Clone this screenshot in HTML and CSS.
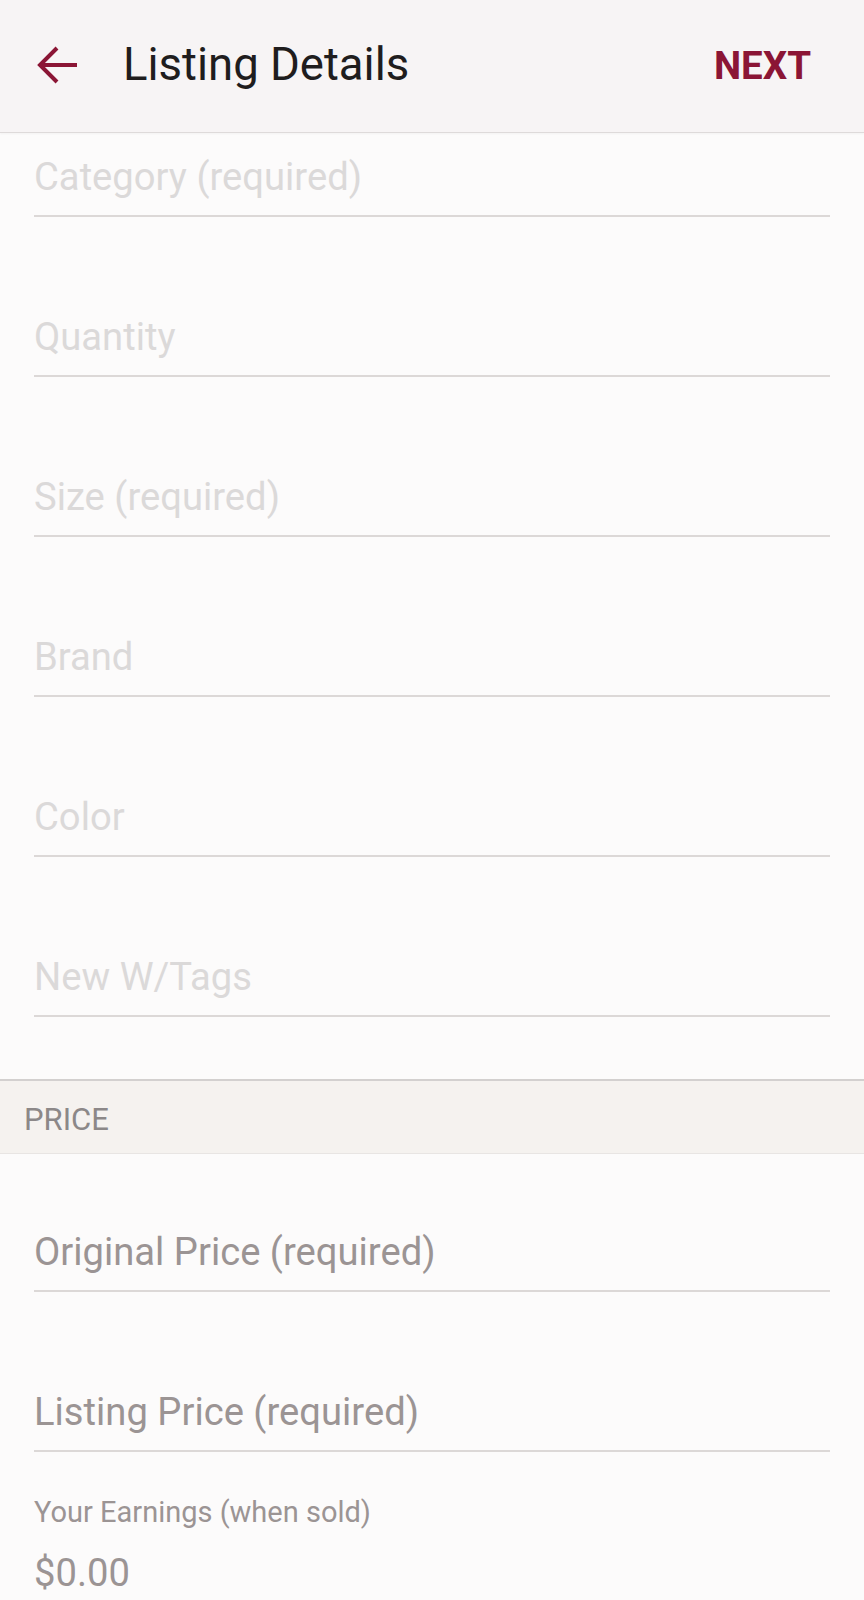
FILE: index.html
```html
<!DOCTYPE html>
<html lang="en">

<head>
      <meta charset="UTF-8">
      <meta name="viewport" content="width=device-width, initial-scale=1.0">
      <title>Listing Details</title>
      <link rel="stylesheet" href="styles.css">
</head>

<body>
      <header class="top-bar">
            <svg class="back-icon" width="40" height="40" viewBox="0 0 40 40">
                  <path d="M4 19H40M20 2L3 19L20 36" fill="none" stroke="#8b1535" stroke-width="4" />
            </svg>
            <h1 class="title">Listing Details</h1>
            <span class="next">NEXT</span>
      </header>

      <div class="fields">
            <div class="field hint">Category (required)</div>
            <div class="field hint">Quantity</div>
            <div class="field hint">Size (required)</div>
            <div class="field hint">Brand</div>
            <div class="field hint">Color</div>
            <div class="field hint">New W/Tags</div>
      </div>

      <div class="section-head">PRICE</div>

      <div class="fields price-fields">
            <div class="field price">Original Price (required)</div>
            <div class="field price">Listing Price (required)</div>
      </div>

      <div class="earnings">
            <div class="earnings-label">Your Earnings (when sold)</div>
            <div class="earnings-value">$0.00</div>
      </div>
</body>

</html>
```

FILE: styles.css
```css
body {
      font-family: Roboto, "Liberation Sans", sans-serif;
      background-color: #fcfbfb;
      margin: 0;
      padding: 0;
}

.top-bar {
      height: 133px;
      box-sizing: border-box;
      display: flex;
      align-items: center;
      padding: 0 53px 4px 37px;
      background-color: #f7f4f5;
      border-bottom: 1px solid #dedada;
      box-shadow: 0 1px 2px rgba(0, 0, 0, 0.04);
}

.back-icon {
      flex: none;
      margin-top: 4px;
}

.title {
      flex: 1;
      margin: 0 0 0 46px;
      font-size: 45.5px;
      font-weight: 400;
      color: #1f1d1e;
}

.next {
      margin-top: 3px;
      font-size: 38.5px;
      font-weight: 700;
      color: #8b1535;
}

.fields {
      display: flex;
      flex-direction: column;
      gap: 94px;
      padding: 18px 34px 0;
}

.field {
      font-size: 38.2px;
      line-height: 48px;
      padding: 2px 0 14px;
      border-bottom: 2px solid #dcd8d7;
}

.hint {
      color: #dbd9d9;
}

.section-head {
      margin-top: 62px;
      height: 75px;
      box-sizing: border-box;
      display: flex;
      align-items: center;
      padding: 4px 0 0 24px;
      background-color: #f5f2ef;
      border-top: 2px solid #d3d0cf;
      border-bottom: 1px solid #e8e5e3;
      font-size: 31px;
      color: #8c8888;
}

.price-fields {
      padding-top: 72px;
}

.price {
      color: #9b9494;
}

.earnings {
      padding: 40px 34px 0;
      color: #9b9494;
}

.earnings-label {
      font-size: 29px;
      line-height: 40px;
}

.earnings-value {
      margin-top: 17px;
      font-size: 38.2px;
      line-height: 48px;
}
```
